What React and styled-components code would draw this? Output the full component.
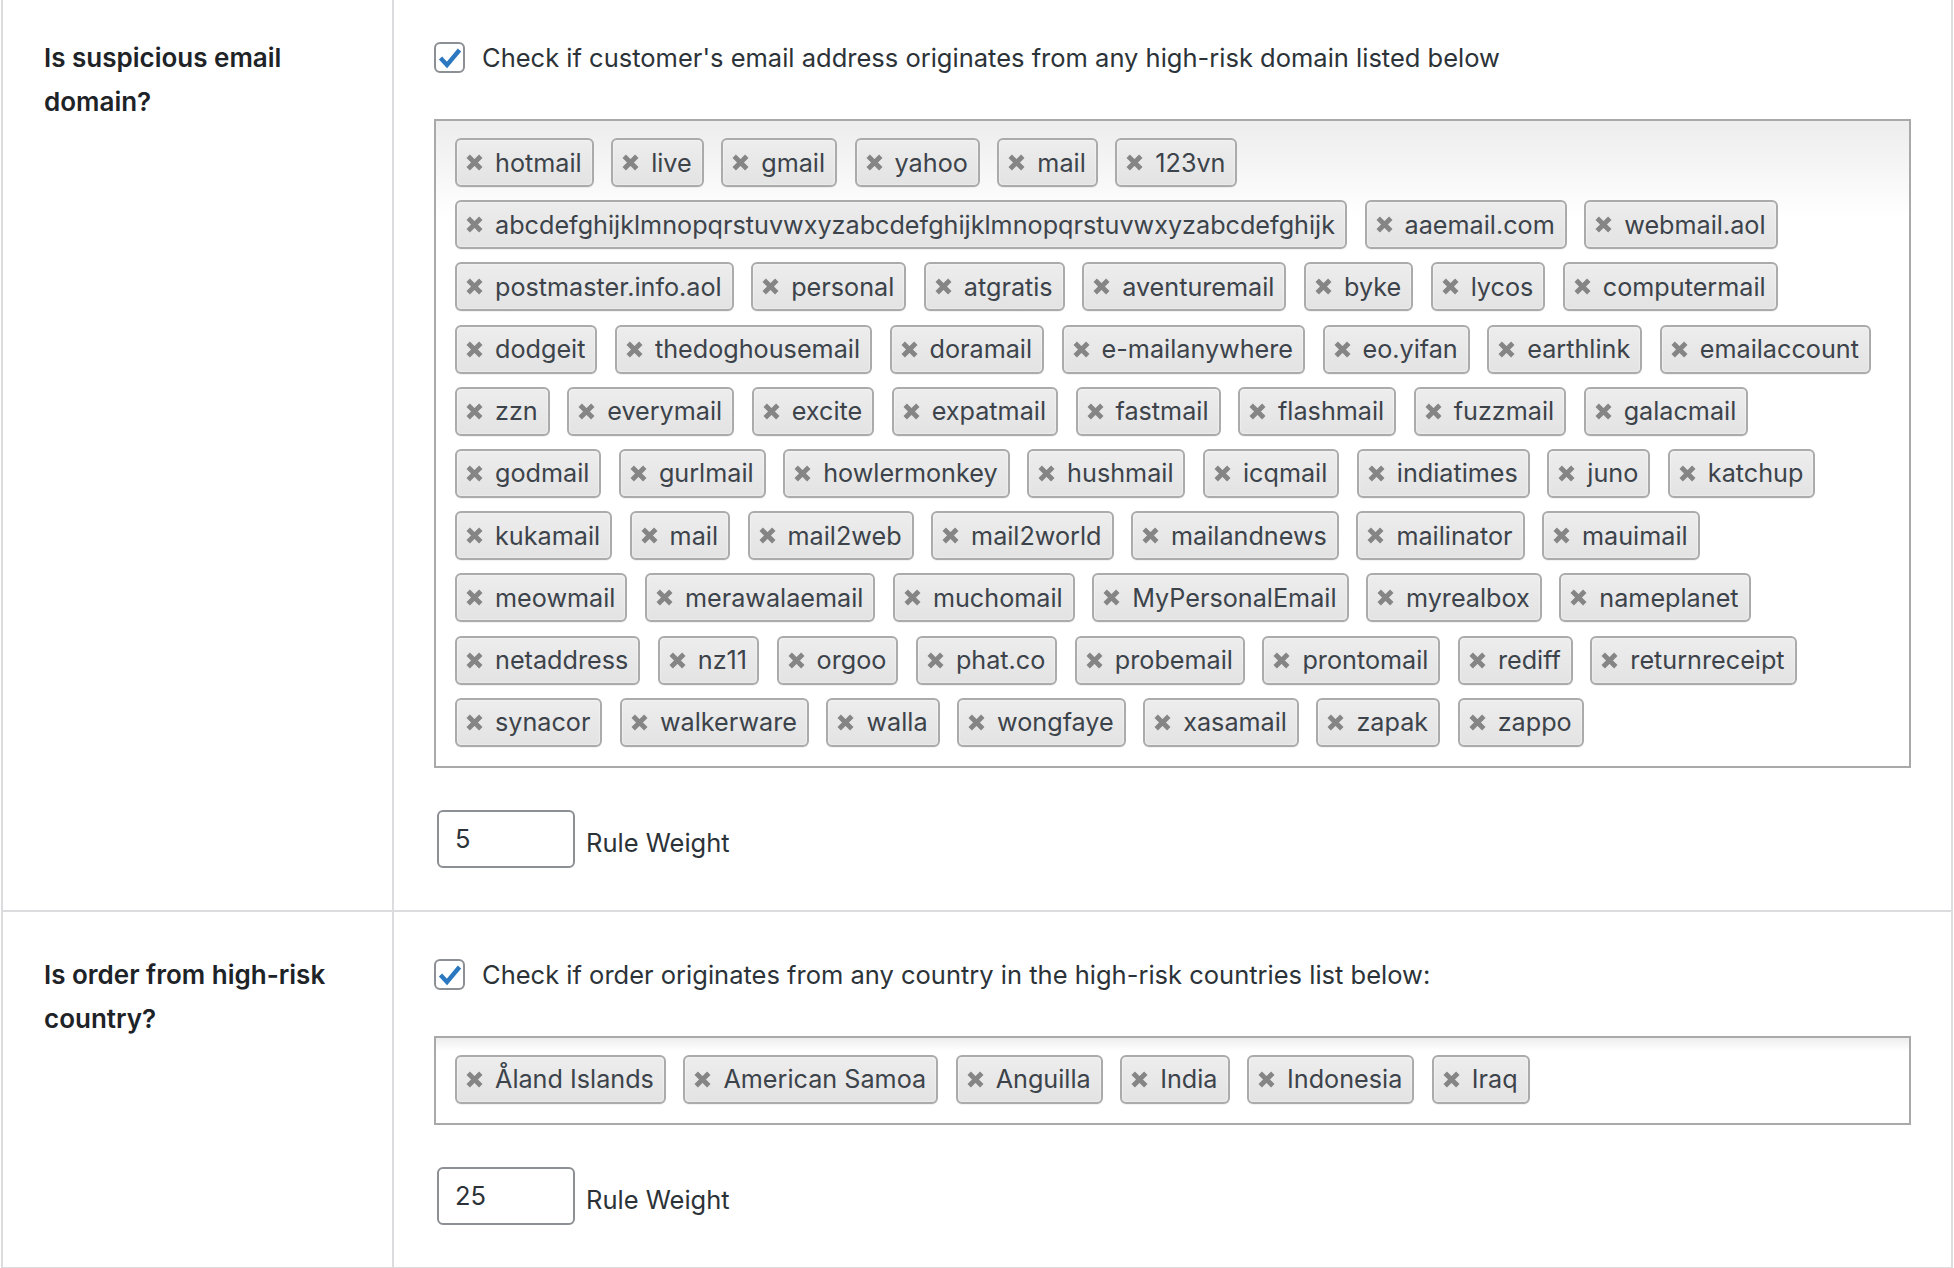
import React from "react";
import styled, { createGlobalStyle } from "styled-components";

const emailDomains = [
  "hotmail", "live", "gmail", "yahoo", "mail", "123vn",
  "abcdefghijklmnopqrstuvwxyzabcdefghijklmnopqrstuvwxyzabcdefghijk", "aaemail.com", "webmail.aol",
  "postmaster.info.aol", "personal", "atgratis", "aventuremail", "byke", "lycos", "computermail",
  "dodgeit", "thedoghousemail", "doramail", "e-mailanywhere", "eo.yifan", "earthlink", "emailaccount",
  "zzn", "everymail", "excite", "expatmail", "fastmail", "flashmail", "fuzzmail", "galacmail",
  "godmail", "gurlmail", "howlermonkey", "hushmail", "icqmail", "indiatimes", "juno", "katchup",
  "kukamail", "mail", "mail2web", "mail2world", "mailandnews", "mailinator", "mauimail",
  "meowmail", "merawalaemail", "muchomail", "MyPersonalEmail", "myrealbox", "nameplanet",
  "netaddress", "nz11", "orgoo", "phat.co", "probemail", "prontomail", "rediff", "returnreceipt",
  "synacor", "walkerware", "walla", "wongfaye", "xasamail", "zapak", "zappo",
];

const countries = ["Åland Islands", "American Samoa", "Anguilla", "India", "Indonesia", "Iraq"];

const rules = [
  {
    label: "Is suspicious email domain?",
    check: "Check if customer's email address originates from any high-risk domain listed below",
    items: emailDomains,
    weight: "5",
  },
  {
    label: "Is order from high-risk country?",
    check: "Check if order originates from any country in the high-risk countries list below:",
    items: countries,
    weight: "25",
  },
];

const CheckMark = () => (
  <svg width="31" height="31" viewBox="0 0 31 31">
    <path d="M6.5 16 L13 23 L25.5 8" fill="none" stroke="#2c78c0" strokeWidth="4.4" />
  </svg>
);

const RemoveIcon = () => (
  <svg width="17" height="17" viewBox="0 0 17 17">
    <path d="M2.2 2.2 L14.8 14.8 M14.8 2.2 L2.2 14.8" stroke="#858585" strokeWidth="4.8" />
  </svg>
);

const App = () => {
  return (
    <>
      <GlobalStyle />
      <Table>
        {rules.map((rule) => (
          <Row key={rule.label}>
            <LabelCell>{rule.label}</LabelCell>
            <FieldCell>
              <CheckLine>
                <CheckBox>
                  <CheckMark />
                </CheckBox>
                {rule.check}
              </CheckLine>
              <ChoiceBox>
                {rule.items.map((item, i) => (
                  <Choice key={item + i}>
                    <RemoveIcon />
                    {item}
                  </Choice>
                ))}
              </ChoiceBox>
              <WeightLine>
                <WeightInput defaultValue={rule.weight} />
                <WeightLabel>Rule Weight</WeightLabel>
              </WeightLine>
            </FieldCell>
          </Row>
        ))}
      </Table>
    </>
  );
};

const GlobalStyle = createGlobalStyle`
  body {
    margin: 0;
    background: #ffffff;
    font-family: Inter, "Liberation Sans", sans-serif;
    color: #2c3338;
    overflow: hidden;
  }
`;

const Table = styled.div`
  margin: -5px 1px 0 1px;
  border-left: 2px solid #dcdcde;
  border-right: 2px solid #dcdcde;
  background: #fff;
`;

const Row = styled.div`
  display: grid;
  grid-template-columns: 389px 1fr;
  border-bottom: 2px solid #dcdcde;
`;

const LabelCell = styled.div`
  padding: 41px 40px 0 41px;
  font-size: 26px;
  line-height: 44px;
  font-weight: 600;
  color: #1d2327;
`;

const FieldCell = styled.div`
  border-left: 2px solid #dcdcde;
  padding: 47px 40px 42px 40px;
  font-size: 25.5px;
`;

const CheckLine = styled.div`
  display: flex;
  align-items: center;
  gap: 17px;
  height: 31px;
  color: #2c3338;
`;

const CheckBox = styled.span`
  width: 31px;
  height: 31px;
  box-sizing: border-box;
  border: 2px solid #8c8f94;
  border-radius: 6px;
  background: #fff;
  display: flex;
  align-items: center;
  justify-content: center;
  flex-shrink: 0;

  svg {
    margin: -2px;
  }
`;

const ChoiceBox = styled.div`
  margin-top: 46px;
  border: 2px solid #a9a9a9;
  padding: 17px 30px 19px 19px;
  display: flex;
  flex-wrap: wrap;
  column-gap: 17.5px;
  row-gap: 13.2px;
  background: linear-gradient(to bottom, #eeeeee 1%, #ffffff 15%);
`;

const Choice = styled.span`
  display: inline-flex;
  align-items: center;
  gap: 12px;
  height: 49px;
  box-sizing: border-box;
  padding: 0 10px 0 9px;
  border: 2px solid #ababab;
  border-radius: 6px;
  background: linear-gradient(to bottom, #ededed, #e3e3e3);
  box-shadow: inset 0 0 2px #fff, 0 1px 0 rgba(0, 0, 0, 0.05);
  color: #3c434a;
  font-size: 25.2px;
  white-space: nowrap;
`;

const WeightLine = styled.div`
  margin-top: 42px;
  display: flex;
  align-items: center;
  gap: 11px;
  color: #2c3338;
`;

const WeightInput = styled.input`
  margin-left: 3px;
  width: 138px;
  height: 58px;
  box-sizing: border-box;
  border: 2px solid #8c8f94;
  border-radius: 6px;
  padding: 0 16px;
  font-family: Inter, "Liberation Sans", sans-serif;
  font-size: 25.5px;
  color: #2c3338;
  background: #fff;
  outline: none;
`;

const WeightLabel = styled.span`
  margin-top: 7px;
`;

export default App;
